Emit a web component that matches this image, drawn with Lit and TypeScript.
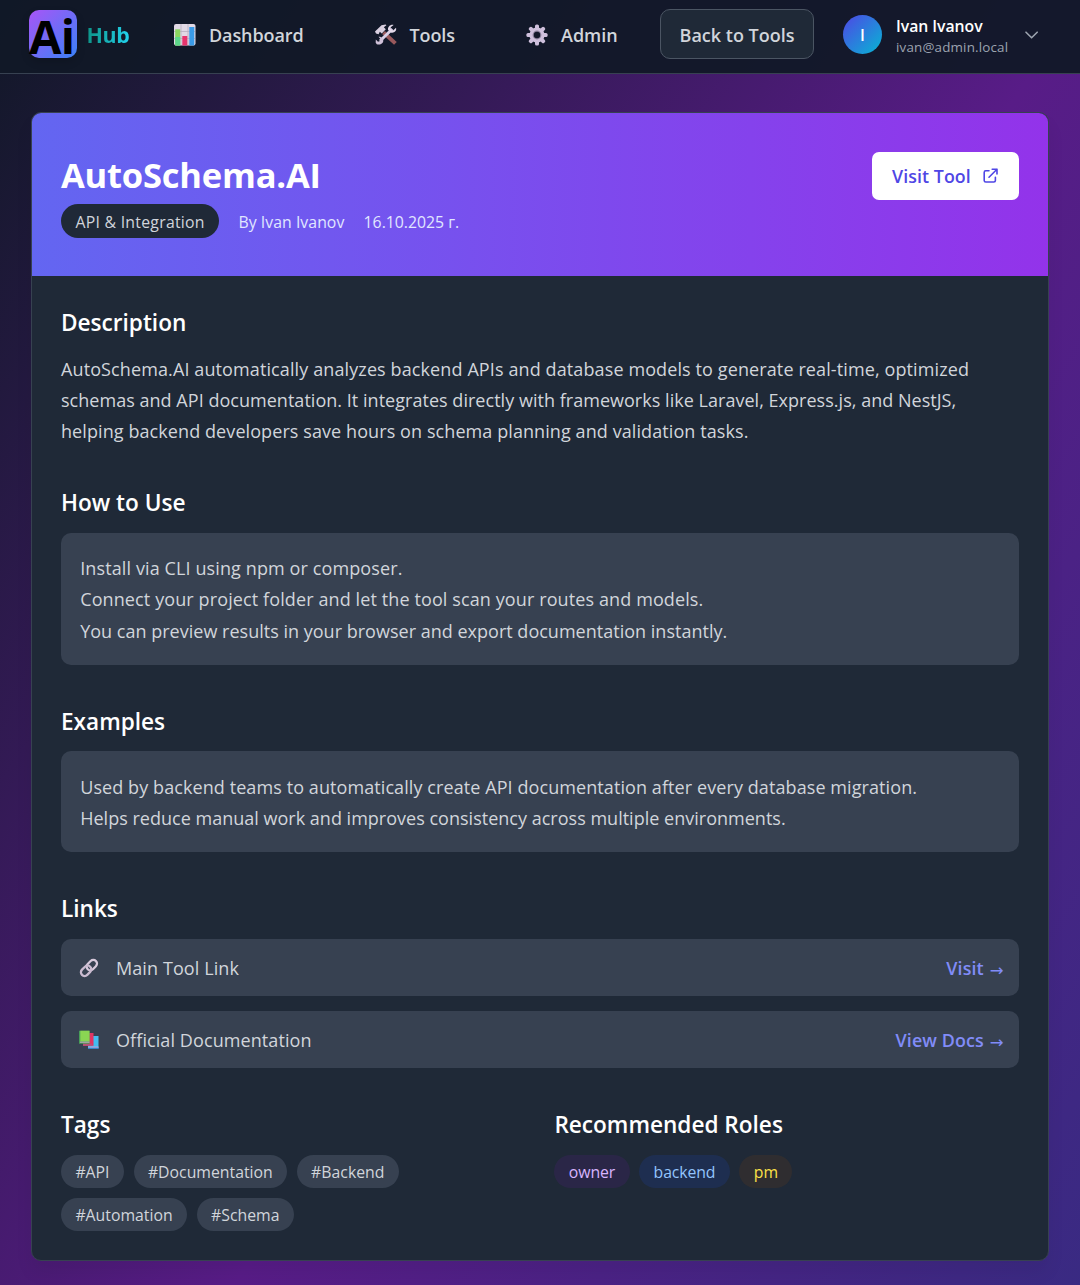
import { LitElement, html, css, svg } from "lit";
import { customElement } from "lit/decorators.js";

const chartIcon = svg`<svg class="ico" viewBox="0 0 22 22" width="22" height="22">
  <rect x="0" y="0" width="21.5" height="21.5" rx="2" fill="#e2d9e6"/>
  <path d="M0 7.5H21M7 0V21M14 0V21M0 14.5H21" stroke="#b9afc0" stroke-width=".8"/>
  <rect x="1.2" y="5.3" width="5" height="16.2" fill="#8bd65f"/><rect x="1.2" y="13" width="5" height="8.5" fill="#5cd68b"/>
  <rect x="8.3" y="12" width="5" height="9.5" fill="#e8336d"/>
  <rect x="15.3" y="3" width="5" height="18.5" fill="#3a9be8"/></svg>`;

const toolsIcon = svg`<svg class="ico" viewBox="0 0 22 22" width="22" height="22">
  <path d="M8.5 8.5L20.4 19.4" stroke="#99595c" stroke-width="4" />
  <path d="M1 9.5L0 7.6 6.5 1.2 10.5 .4 11.4 1.3 8.8 3.2 10.8 5.3 6.8 9.4 4.8 7.8 3.6 10.2Z" fill="#d9cfe0"/>
  <path d="M5 17L17.3 5" stroke="#d9cfe6" stroke-width="3"/>
  <path d="M18.6 .9L15.7 3.3 16 5.9 18.4 6.2 21 3.8C22 7 19 9.4 15.7 8.4L13 5.8C12.7 2.5 15.5 .2 18.6 .9Z" fill="#e3d9ea"/>
  <path d="M.8 15.5L3 17.7 5 17 5.2 14.8 3.5 12.8C6.7 12.5 9.2 15 8 18.3 6.5 20.8 3.5 21 1.8 20.2L.7 18.7Z" fill="#d0c1d9"/></svg>`;

const gearIcon = svg`<svg class="ico" viewBox="-11 -11 22 22" width="22" height="22">
  <g fill="#cfc0dc">${[0, 45, 90, 135].map(
    (a) => svg`<rect x="-2" y="-10.6" width="4" height="21.2" rx="1.6" transform="rotate(${a})"/>`
  )}<circle r="7.6"/></g>
  <circle r="4.4" fill="#8c809b"/><circle r="3.2" fill="#131829"/></svg>`;

const linkIcon = svg`<svg class="ico" viewBox="0 0 20 20" width="20" height="20">
  <g fill="none" stroke-width="2.3"><rect x="-5.8" y="-3.7" width="11.6" height="7.4" rx="3.7" transform="translate(12.8 7.1) rotate(-45)" stroke="#d8cadc"/>
  <rect x="-5.8" y="-3.7" width="11.6" height="7.4" rx="3.7" transform="translate(7.1 12.8) rotate(-45)" stroke="#cabbd0"/></g></svg>`;

const booksIcon = svg`<svg class="ico" viewBox="0 0 20 20" width="20" height="20">
  <path d="M9 6H19.5V18.5H9Z" fill="#42bdf0"/><path d="M9 16.4H19.5V18.2H9Z" fill="#b4a5dc"/><path d="M9 17.8H19.5V18.8H9Z" fill="#2788d2"/>
  <path d="M4 3H14.5V15.8H4Z" fill="#e03562"/><path d="M4 13.8H13V15.8H4Z" fill="#b65378"/>
  <path d="M0 .8H10.5V13.8H0Z" fill="#489e58"/><path d="M1.3 .8H10.5V11.6H1.3Z" fill="#8ad653"/><path d="M1 11.6H10.5V13H1Z" fill="#a0a5a4"/></svg>`;

const externalIcon = svg`<svg class="ext" viewBox="0 0 24 24" width="19.2" height="19.2" fill="none" stroke="#4f46e5" stroke-width="2" stroke-linecap="round" stroke-linejoin="round">
  <path d="M10 6H6a2 2 0 00-2 2v10a2 2 0 002 2h10a2 2 0 002-2v-4M14 4h6m0 0v6m0-6L10 14"/></svg>`;

const chevronIcon = svg`<svg class="chev" viewBox="0 0 24 24" width="19.2" height="19.2" fill="none" stroke="#9ca3af" stroke-width="2" stroke-linecap="round" stroke-linejoin="round">
  <path d="M19 9l-7 7-7-7"/></svg>`;

@customElement("app-root")
export class AppRoot extends LitElement {
  static styles = css`
    :host { display: block; height: 1285px; overflow: hidden; box-sizing: border-box;
      font-family: "Open Sans", "Noto Sans", sans-serif; font-size: 18px; color: #d1d5db;
      background: linear-gradient(to bottom right, #111827, #581c87, #312e81) 0 0 / 1080px 1640px no-repeat; }
    * { box-sizing: border-box; }
    svg { display: block; flex: none; }
    h1, h2, p { margin: 0; }
    .top { height: 74px; display: flex; align-items: center; padding: 0 0 5px 29px; background: rgba(17, 24, 39, .95); border-bottom: 1px solid #374151; }
    .logo { width: 48px; height: 48px; border-radius: 10px; background: linear-gradient(135deg, #a855f7, #3b82f6);
      display: flex; align-items: center; color: #000; font-size: 47px; font-weight: 700; line-height: 48px; letter-spacing: -.6px; box-shadow: 0 4px 8px rgba(0,0,0,.15); }
    .logo span { display: block; margin-top: 4px; }
    .hub { margin-left: 9.5px; width: 87.5px; font-size: 21.4px; font-weight: 700; letter-spacing: -.3px; }
    .hub span { background: linear-gradient(90deg, #0d9488, #22d3ee); -webkit-background-clip: text; background-clip: text; color: transparent; }
    .item { display: flex; align-items: center; gap: 13px; padding-top: 2px; font-weight: 600; font-size: 18px; }
    .item.dash { width: 200.5px; letter-spacing: -.1px; } .item.tools { width: 151.5px; letter-spacing: -.1px; } .item.admin { width: 134px; }
    .item svg { margin-top: -1px; }
    .back { width: 154px; height: 50px; display: grid; place-items: center; padding-top: 2px; border: 1px solid #4b5563; border-radius: 10px; background: #1f2937; font-weight: 600; font-size: 18px; }
    .avatar { margin-left: 29px; width: 39px; height: 39px; border-radius: 50%; display: grid; place-items: center; padding-top: 1px; background: linear-gradient(135deg, #4f46e5, #06b6d4); color: #fff; font-size: 16px; font-weight: 600; }
    .who { margin-left: 14px; width: 126px; padding-top: 4px; }
    .name { color: #fff; font-weight: 600; font-size: 15.8px; line-height: 21px; letter-spacing: -.05px; }
    .mail { color: #9ca3af; font-size: 13.4px; line-height: 20px; letter-spacing: .17px; }
    .chev { margin-top: 1px; }
    .card { margin: 38px 31px 0; height: 1149px; border: 1px solid #374151; border-radius: 10px; overflow: hidden; background: #1f2937; box-shadow: 0 12px 18px rgba(0,0,0,.06); }
    .hero { height: 163px; padding: 39px 29px; display: flex; justify-content: space-between; align-items: flex-start; background: linear-gradient(90deg, #6366f1, #9333ea); }
    h1 { color: #fff; font-size: 34.5px; font-weight: 700; line-height: 46px; letter-spacing: -.2px; }
    .meta { display: flex; align-items: center; gap: 19.2px; margin-top: 6px; font-size: 15.8px; color: #e0e7ff; }
    .by, .date { padding-top: 2px; }
    .by { letter-spacing: .05px; }
    .pill { height: 33px; border-radius: 17px; padding: 1px 14.4px 0; display: flex; align-items: center; font-size: 15.8px; background: #374151; color: #d1d5db; white-space: nowrap; }
    .cat { height: 33.6px; padding-top: 1.6px; background: #1f2937; letter-spacing: .27px; }
    .visit { width: 147px; height: 48px; border-radius: 7px; background: #fff; color: #4f46e5; display: flex; align-items: center; justify-content: space-between; padding: 0 19px 0 20px; font-weight: 600; font-size: 17.8px; letter-spacing: .08px; }
    .body { padding: 29px; display: flex; flex-direction: column; gap: 38.4px; }
    h2 { color: #fff; font-size: 22.6px; font-weight: 600; line-height: 33.6px; padding-top: 1.4px; height: 33.6px; margin-bottom: 14.4px; }
    .text { line-height: 31.2px; white-space: nowrap; }
    .line { display: block; position: relative; top: 1.1px; }
    .wide { letter-spacing: .11px; }
    .mid { letter-spacing: .085px; }
    .slim { letter-spacing: .03px; }
    .flat { letter-spacing: .012px; }
    .box { background: #374151; border-radius: 10px; padding: 19.2px; }
    .rows { display: flex; flex-direction: column; gap: 15px; padding-top: .6px; }
    .row { height: 57px; border-radius: 10px; background: #374151; display: flex; align-items: center; padding: 0 15.4px 0 18px; }
    .row .label { margin-left: 17px; flex: 1; letter-spacing: .09px; padding-top: 1px; }
    .row .go { color: #818cf8; font-weight: 600; font-size: 17.9px; letter-spacing: .1px; padding-top: 1px; display: flex; align-items: baseline; gap: 6px; }
    .arrow { font-family: "DejaVu Sans", sans-serif; font-weight: 400; font-size: 16.5px; line-height: 18px; position: relative; top: 1px; letter-spacing: 0; }
    .cols { display: grid; grid-template-columns: 1fr 1fr; gap: 28.8px; }
    .pills { display: flex; flex-wrap: wrap; gap: 10px 9.6px; padding-top: .6px; }
    .owner { background: rgba(88, 28, 135, .2); color: #d8b4fe; letter-spacing: -.07px; }
    .backend { background: rgba(30, 58, 138, .3); color: #93c5fd; letter-spacing: -.1px; }
    .pm { background: rgba(113, 63, 18, .2); color: #fde047; }
  `;

  render() {
    return html`
      <header class="top">
        <div class="logo"><span>Ai</span></div>
        <div class="hub"><span>Hub</span></div>
        <div class="item dash">${chartIcon}<span>Dashboard</span></div>
        <div class="item tools">${toolsIcon}<span>Tools</span></div>
        <div class="item admin">${gearIcon}<span>Admin</span></div>
        <div class="back">Back to Tools</div>
        <div class="avatar">I</div>
        <div class="who"><div class="name">Ivan Ivanov</div><div class="mail">ivan@admin.local</div></div>
        ${chevronIcon}
      </header>
      <main class="card">
        <div class="hero">
          <div>
            <h1>AutoSchema.AI</h1>
            <div class="meta"><span class="pill cat">API &amp; Integration</span><span class="by">By Ivan Ivanov</span><span class="date">16.10.2025 г.</span></div>
          </div>
          <div class="visit"><span>Visit Tool</span>${externalIcon}</div>
        </div>
        <div class="body">
          <section><h2>Description</h2>
            <p class="text">
              <span class="line wide">AutoSchema.AI automatically analyzes backend APIs and database models to generate real-time, optimized</span>
              <span class="line slim">schemas and API documentation. It integrates directly with frameworks like Laravel, Express.js, and NestJS,</span>
              <span class="line mid">helping backend developers save hours on schema planning and validation tasks.</span>
            </p>
          </section>
          <section><h2>How to Use</h2>
            <div class="box text">
              <span class="line wide">Install via CLI using npm or composer.</span>
              <span class="line wide">Connect your project folder and let the tool scan your routes and models.</span>
              <span class="line flat">You can preview results in your browser and export documentation instantly.</span>
            </div>
          </section>
          <section><h2>Examples</h2>
            <div class="box text">
              <span class="line mid">Used by backend teams to automatically create API documentation after every database migration.</span>
              <span class="line flat">Helps reduce manual work and improves consistency across multiple environments.</span>
            </div>
          </section>
          <section><h2>Links</h2>
            <div class="rows">
              <div class="row">${linkIcon}<span class="label">Main Tool Link</span><span class="go">Visit <span class="arrow">→</span></span></div>
              <div class="row">${booksIcon}<span class="label">Official Documentation</span><span class="go">View Docs <span class="arrow">→</span></span></div>
            </div>
          </section>
          <div class="cols">
            <section><h2>Tags</h2>
              <div class="pills">${["API", "Documentation", "Backend", "Automation", "Schema"].map((t) => html`<span class="pill">#${t}</span>`)}</div>
            </section>
            <section><h2>Recommended Roles</h2>
              <div class="pills">${["owner", "backend", "pm"].map((r) => html`<span class="pill ${r}">${r}</span>`)}</div>
            </section>
          </div>
        </div>
      </main>
    `;
  }
}
